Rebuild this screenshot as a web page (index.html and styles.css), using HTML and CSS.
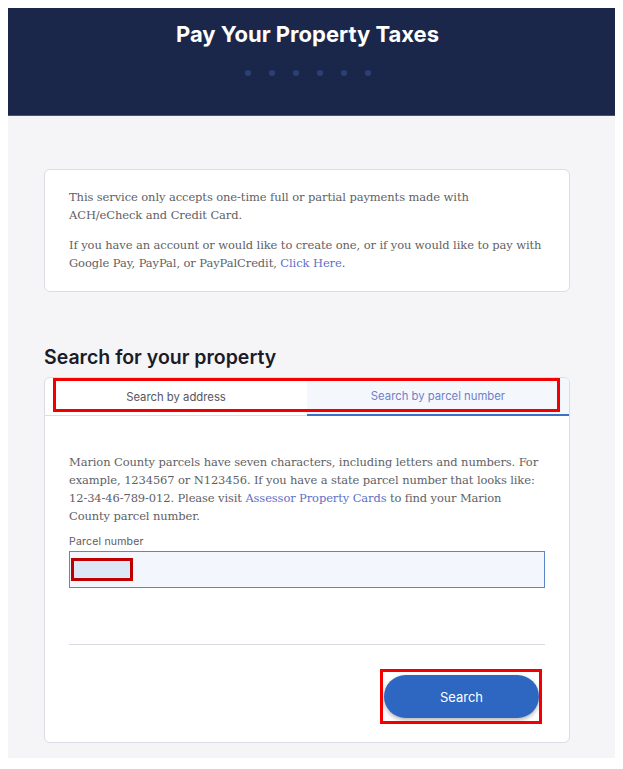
FILE: index.html
```html
<!DOCTYPE html>
<html lang="en">
<head>
<meta charset="utf-8">
<title>Pay Your Property Taxes</title>
<link rel="stylesheet" href="styles.css">
</head>
<body>
<header class="hero">
  <h1 class="hero-title">Pay Your Property Taxes</h1>
  <div class="dots">
    <span class="dot"></span><span class="dot"></span><span class="dot"></span><span class="dot"></span><span class="dot"></span><span class="dot"></span>
  </div>
</header>
<main class="content">
  <section class="card info">
    <p>This service only accepts one-time full or partial payments made with ACH/eCheck and Credit Card.</p>
    <p>If you have an account or would like to create one, or if you would like to pay with Google Pay, PayPal, or PayPalCredit, <a href="#" class="link">Click Here</a>.</p>
  </section>
  <h2 class="section-title">Search for your property</h2>
  <section class="card search">
    <div class="tabs">
      <div class="tab">Search by address</div>
      <div class="tab active">Search by parcel number</div>
      <span class="mark mark-tabs"></span>
    </div>
    <div class="search-body">
      <p class="hint">Marion County parcels have seven characters, including letters and numbers. For<br>example, 1234567 or N123456. If you have a state parcel number that looks like:<br>12-34-46-789-012. Please visit <a href="#" class="link">Assessor Property Cards</a> to find your Marion<br>County parcel number.</p>
      <label class="field-label" for="parcel">Parcel number</label>
      <div class="field">
        <input id="parcel" class="input" type="text">
        <span class="mark mark-input"></span>
      </div>
      <hr class="divider">
      <div class="actions">
        <div class="btn-wrap">
          <button class="btn" type="button">Search</button>
          <span class="mark mark-btn"></span>
        </div>
      </div>
    </div>
  </section>
</main>
</body>
</html>
```
FILE: styles.css
```css
body {
  margin: 8px;
  background: #ffffff;
  font-family: "Inter", "Roboto", sans-serif;
}
.hero {
  background: #1b274a;
  height: 108px;
  display: flex;
  flex-direction: column;
  align-items: center;
  border-bottom: 1px solid #4a5372;
  box-sizing: border-box;
  padding-right: 8px;
}
.hero-title {
  margin: 12px 0 0;
  color: #ffffff;
  font-family: "Inter", sans-serif;
  font-weight: 700;
  font-size: 22px;
  line-height: 28px;
}
.dots {
  display: flex;
  gap: 18px;
  margin-top: 22px;
}
.dot {
  width: 6px;
  height: 6px;
  border-radius: 50%;
  background: #2b3f78;
}
.content {
  background: #f5f5f8;
  padding: 53px 45px 15px 36px;
}
.card {
  background: #ffffff;
  border: 1px solid #dcdde4;
  border-radius: 6px;
}
.info {
  padding: 18px 24px 19px;
}
.info p, .search-body p {
  margin: 0;
  font-family: "DejaVu Serif", serif;
  font-size: 11.5px;
  line-height: 18px;
  color: #5f5f66;
}
.info p {
  letter-spacing: -0.1px;
}
.info p + p {
  margin-top: 12px;
}
.search-body .hint {
  letter-spacing: -0.12px;
  white-space: nowrap;
}
.link {
  color: #5f6fc8;
  text-decoration: none;
}
.section-title {
  margin: 53px 0 8px;
  font-family: "Inter", sans-serif;
  font-weight: 600;
  font-size: 19.5px;
  line-height: 24px;
  color: #1a1c2a;
}
.search {
  overflow: hidden;
}
.tabs {
  position: relative;
  display: grid;
  grid-template-columns: 1fr 1fr;
  height: 37px;
  border-bottom: 1px solid #dcdde4;
}
.tab {
  display: flex;
  align-items: center;
  justify-content: center;
  font-family: "Inter", sans-serif;
  font-size: 11.3px;
  color: #555660;
}
.tab.active {
  background: #f4f8fd;
  color: #6f7fc8;
  border-bottom: 2px solid #3e6fc4;
  margin-bottom: -1px;
}
.mark {
  position: absolute;
  box-sizing: border-box;
  pointer-events: none;
}
.mark-tabs {
  left: 8px;
  right: 9px;
  top: 0;
  height: 34px;
  border: 3px solid #f20000;
}
.search-body {
  padding: 37px 24px 24px;
}
.field-label {
  display: block;
  margin-top: 10px;
  font-family: "Inter", sans-serif;
  font-size: 10.5px;
  color: #5a5b63;
  letter-spacing: 0.2px;
}
.field {
  position: relative;
  margin-top: 3px;
}
.input {
  display: block;
  width: 100%;
  box-sizing: border-box;
  height: 37px;
  border: 1px solid #5b86c9;
  background: #f3f7fd;
  margin: 0;
  padding: 0 10px;
  font-size: 13px;
}
.mark-input {
  left: 2px;
  top: 7px;
  width: 62px;
  height: 23px;
  border: 3px solid #c00000;
  background: #dde8f6;
}
.divider {
  margin: 56px 0 0;
  border: 0;
  border-top: 1px solid #d8dbe5;
}
.actions {
  display: flex;
  justify-content: flex-end;
  padding-top: 30px;
  padding-right: 6px;
}
.btn-wrap {
  position: relative;
}
.btn {
  display: block;
  width: 155px;
  height: 43px;
  border: 0;
  border-radius: 22px;
  background: #2e67c2;
  color: #ffffff;
  font-family: "Inter", sans-serif;
  font-size: 13px;
  box-shadow: 0 2px 4px rgba(0, 0, 0, 0.3);
}
.mark-btn {
  left: -4px;
  right: -3px;
  top: -6px;
  bottom: -6px;
  border: 3px solid #f20000;
}
```
